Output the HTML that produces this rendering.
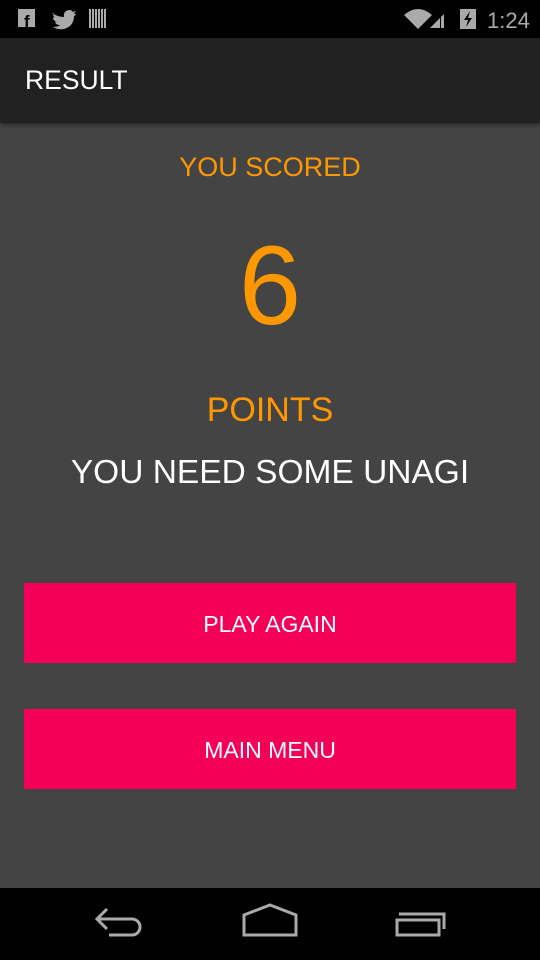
<!DOCTYPE html>
<html><head><meta charset="utf-8"><style>
*{margin:0;padding:0;box-sizing:border-box}
html,body{width:540px;height:960px;overflow:hidden}
body{background:#444;font-family:"Liberation Sans",sans-serif;position:relative}
.sb{position:absolute;left:0;top:0;width:540px;height:38px;background:#000}
.ab{position:absolute;left:0;top:38px;width:540px;height:85px;background:#212121;box-shadow:0 2px 4px rgba(0,0,0,.4)}
.ab span{position:absolute;left:25px;top:27px;color:#fff;font-size:26.5px}
.t{position:absolute;left:0;width:540px;text-align:center;line-height:1}
.btn{position:absolute;left:24px;width:492px;height:80px;background:#F50057;color:#fff;font-size:23px;text-align:center;line-height:82px}
.nav{position:absolute;left:0;top:888px;width:540px;height:72px;background:#000}
</style></head><body>
<div class="sb">
<svg width="540" height="38" style="position:absolute;left:0;top:0">
<rect x="18" y="9" width="17" height="18" fill="#aaa"/><text x="24" y="27" font-size="17" font-weight="bold" fill="#000" font-family="Liberation Sans">f</text>
<path d="M52 13 q6 4 12 4 q-1 -6 5 -7 q3 0 4 2 l3 -1 l-2 3 l2 0 q-1 2 -2 2 q0 10 -10 13 q-6 1 -11 -2 q5 0 7 -2 q-4 0 -5 -3 l2 0 q-4 -1 -4 -5 l2 1 q-3 -3 -1 -5z" fill="#aaa"/>
<g fill="#aaa"><rect x="89" y="9" width="2" height="19"/><rect x="92" y="9" width="2" height="19"/><rect x="95" y="9" width="2" height="19"/><rect x="98" y="9" width="2" height="19"/><rect x="101" y="9" width="2" height="19"/><rect x="104" y="9" width="2" height="19"/></g>
<path d="M404 15 q14 -12 28 0 l-14 14z" fill="#aaa"/>
<path d="M430 28 l10 -10 v10z M441 17 l3 -3 v14 h-3z" fill="#aaa"/>
<rect x="460" y="9" width="16" height="20" fill="#aaa"/><path d="M470 11 l-6 9 h4 l-2 7 l6 -9 h-4z" fill="#000"/>
<text x="487" y="28" font-size="22" fill="#aaa" font-family="Liberation Sans">1:24</text>
</svg></div>
<div class="ab"><span>RESULT</span></div>
<div class="t" style="top:154px;font-size:27px;color:#FF9800">YOU SCORED</div>
<div class="t" style="top:230px;font-size:112px;color:#FF9800">6</div>
<div class="t" style="top:393px;font-size:34px;color:#FF9800">POINTS</div>
<div class="t" style="top:456px;font-size:33.5px;color:#fff">YOU NEED SOME UNAGI</div>
<div class="btn" style="top:583px">PLAY AGAIN</div>
<div class="btn" style="top:709px">MAIN MENU</div>
<div class="nav"><svg width="540" height="72" fill="none" stroke="#aaa" stroke-width="3">
<path d="M107 21 l-10 10 l10 10 M97 31 h35 a8 8 0 0 1 0 16 h-23"/>
<path d="M244 47 v-20 l26 -10 l26 10 v20z"/>
<path d="M397 47 v-15 h42 v15z M399 26 h45 v15"/>
</svg></div>
</body></html>
